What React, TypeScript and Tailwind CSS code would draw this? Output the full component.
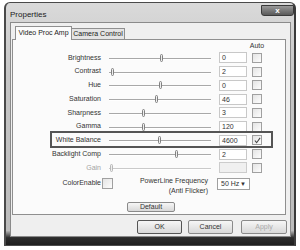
import React from 'react';

const rows = [
  { label: 'Brightness', value: '0', thumb: 162 },
  { label: 'Contrast', value: '2', thumb: 113 },
  { label: 'Hue', value: '0', thumb: 161 },
  { label: 'Saturation', value: '46', thumb: 157 },
  { label: 'Sharpness', value: '3', thumb: 144 },
  { label: 'Gamma', value: '120', thumb: 144 },
  { label: 'White Balance', value: '4600', thumb: 160, checked: true },
  { label: 'Backlight Comp', value: '2', thumb: 177 },
  { label: 'Gain', value: '', thumb: 112, disabled: true },
];

function Checkbox({ checked, size = 'w-[10px] h-[10px]' }: { checked?: boolean; size?: string }) {
  return (
    <div className={`${size} shrink-0 border border-[#a0a0a0] bg-gradient-to-br from-[#e4e4e4] to-[#fdfdfd] flex items-center justify-center`}>
      {checked && (
        <svg width="7" height="7" viewBox="0 0 8 8">
          <path d="M1 4 L3 6.5 L7 1" fill="none" stroke="#444" strokeWidth="1.2" />
        </svg>
      )}
    </div>
  );
}

function Slider({ thumb, disabled }: { thumb: number; disabled?: boolean }) {
  return (
    <div className="relative ml-[6px] w-[106px] h-full shrink-0">
      <div className={`absolute left-[2px] right-[2px] top-1/2 h-px ${disabled ? 'bg-[#cacaca]' : 'bg-[#a8a8a8]'}`} />
      <div className="absolute left-[2px] right-[2px] top-1/2 mt-px h-px bg-white" />
      <div
        className={`absolute top-1/2 -mt-[4px] w-[3px] h-[8px] rounded-[2px] border ${disabled ? 'border-[#b8b8b8]' : 'border-[#808080]'} bg-[#eeeeee]`}
        style={{ left: thumb - 108 - 1.5 }}
      />
    </div>
  );
}

function Button({ label, w, disabled, def }: { label: string; w: string; disabled?: boolean; def?: boolean }) {
  return (
    <div
      className={`${w} h-full rounded-[2px] border ${def ? 'border-[#555]' : 'border-[#8a8a8a]'} bg-gradient-to-b from-[#f6f6f6] to-[#d8d8d8] flex items-center justify-center text-[7px] ${disabled ? 'text-[#aaa]' : 'text-[#333]'}`}
    >
      {label}
    </div>
  );
}

export default function App() {
  return (
    <div className="relative w-[300px] h-[250px] bg-white overflow-hidden" style={{ fontFamily: '"Liberation Sans", Arial, sans-serif' }}>
      <div className="ml-[4px] mt-[2px] w-[292px] h-[244px] border border-x-2 border-[#4a4a4a] border-r-[#3a3a3a] rounded-t-[6px] bg-[linear-gradient(to_bottom,#dadada,#c6c6c6_30%,#bcbcbc_94%,#2c2c2c_97%,#1e1e1e)] flex flex-col">
        <div className="h-[19px] flex items-start justify-between shrink-0">
          <span className="pl-[4px] pt-[7px] text-[8px] leading-[10px] text-[#222]">Properties</span>
          <div className="mt-[2px] w-[33px] h-[11px] rounded-b-[3px] border border-[#3a3a3a] bg-gradient-to-b from-[#9a9a9a] to-[#5a5a5a] flex items-center justify-center text-[8px] leading-none font-bold text-white">
            x
          </div>
        </div>
        <div className="ml-[4px] mr-[3px] h-[215px] border border-[#8a8a8a] bg-[#efefef] px-[1px] pt-[3px] flex flex-col">
          <div className="h-[13px] flex items-end pl-[3px] shrink-0">
            <div className="relative z-10 -mb-px w-[57px] h-[14px] border border-b-0 border-[#8f8f8f] bg-[#fbfbfb] flex items-center justify-center text-[7px] text-[#222]">
              Video Proc Amp
            </div>
            <div className="w-[53px] h-[11px] border border-l-0 border-b-0 border-[#8f8f8f] bg-[#e4e4e4] flex items-center justify-center text-[7px] text-[#222]">
              Camera Control
            </div>
          </div>
          <div className="w-[274px] h-[176px] border border-[#8f8f8f] bg-[#fbfbfb] pt-[2px] flex flex-col text-[7px] text-[#333] shrink-0">
            <div className="h-[9px] flex items-center shrink-0">
              <div className="w-[239px]" />
              <div className="w-[10px] flex justify-center whitespace-nowrap">Auto</div>
            </div>
            {rows.map((r) => (
              <div key={r.label} className="h-[13.75px] flex items-center shrink-0">
                <div className={`w-[88px] text-right whitespace-nowrap ${r.disabled ? 'text-[#a4a4a4]' : ''}`}>{r.label}</div>
                <Slider thumb={r.thumb} disabled={r.disabled} />
                <div
                  className={`ml-[6px] w-[28px] h-[11px] border ${r.disabled ? 'border-[#cccccc] bg-[#f0f0f0]' : 'border-[#c8c8c8] bg-white'} pl-[2px] flex items-center leading-none shrink-0`}
                >
                  {r.value}
                </div>
                <div className="ml-[5px]">
                  <Checkbox checked={r.checked} />
                </div>
              </div>
            ))}
            <div className="h-[18px] flex items-start pt-[3px] shrink-0">
              <div className="w-[88px] flex items-center justify-end h-[11px] whitespace-nowrap">ColorEnable</div>
              <div className="ml-[1px]">
                <Checkbox size="w-[11px] h-[11px]" />
              </div>
              <div className="ml-[11px] w-[84px] text-right leading-[10px] -mt-[2px] whitespace-nowrap">
                <div>PowerLine Frequency</div>
                <div>(Anti Flicker)</div>
              </div>
              <div className="ml-[9px] w-[33px] h-[12px] border border-[#a0a0a0] bg-white flex items-center justify-between pl-[3px] pr-[3px] leading-none">
                <span>50 Hz</span>
                <span className="text-[6px]">▼</span>
              </div>
            </div>
            <div className="mt-[9px] h-[10px] flex shrink-0">
              <div className="ml-[114px]">
                <Button label="Default" w="w-[48px]" />
              </div>
            </div>
          </div>
          <div className="mt-[5px] h-[14px] flex justify-end pr-[2px] shrink-0">
            <Button label="OK" w="w-[45px]" def />
            <div className="w-[6px]" />
            <Button label="Cancel" w="w-[45px]" />
            <div className="w-[8px]" />
            <Button label="Apply" w="w-[46px]" disabled />
          </div>
        </div>
      </div>
      <div className="absolute left-[50px] top-[131px] w-[223px] h-[17px] border-2 border-[#555]" />
    </div>
  );
}
